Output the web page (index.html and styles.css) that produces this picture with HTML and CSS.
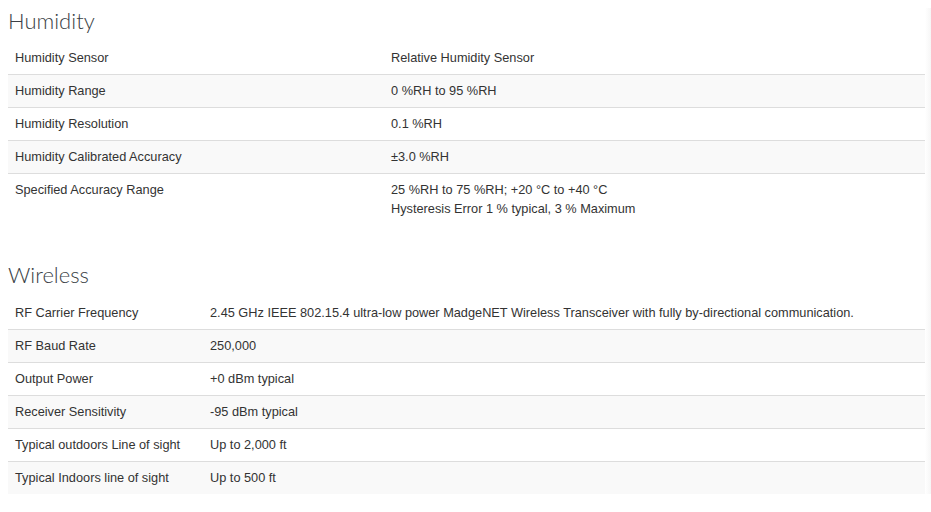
FILE: index.html
```html
<!DOCTYPE html>
<html>
<head>
<meta charset="utf-8">
<link rel="stylesheet" href="styles.css">
</head>
<body>
<div class="page">
  <section class="spec spec-humidity">
    <h2 class="spec-title">Humidity</h2>
    <table class="spec-table">
      <colgroup><col class="col-label-wide"><col></colgroup>
      <tbody>
        <tr><td>Humidity Sensor</td><td>Relative Humidity Sensor</td></tr>
        <tr><td>Humidity Range</td><td>0 %RH to 95 %RH</td></tr>
        <tr><td>Humidity Resolution</td><td>0.1 %RH</td></tr>
        <tr><td>Humidity Calibrated Accuracy</td><td>±3.0 %RH</td></tr>
        <tr><td>Specified Accuracy Range</td><td>25 %RH to 75 %RH; +20 °C to +40 °C<br>Hysteresis Error 1 % typical, 3 % Maximum</td></tr>
      </tbody>
    </table>
  </section>
  <section class="spec spec-wireless">
    <h2 class="spec-title">Wireless</h2>
    <table class="spec-table">
      <colgroup><col class="col-label-narrow"><col></colgroup>
      <tbody>
        <tr><td>RF Carrier Frequency</td><td>2.45 GHz IEEE 802.15.4 ultra-low power MadgeNET Wireless Transceiver with fully by-directional communication.</td></tr>
        <tr><td>RF Baud Rate</td><td>250,000</td></tr>
        <tr><td>Output Power</td><td>+0 dBm typical</td></tr>
        <tr><td>Receiver Sensitivity</td><td>-95 dBm typical</td></tr>
        <tr><td>Typical outdoors Line of sight</td><td>Up to 2,000 ft</td></tr>
        <tr><td>Typical Indoors line of sight</td><td>Up to 500 ft</td></tr>
      </tbody>
    </table>
  </section>
</div>
</body>
</html>
```
FILE: styles.css
```css
html, body {
  margin: 0;
  padding: 0;
  background: #fff;
}
body {
  font-family: "Liberation Sans", Arial, sans-serif;
  font-size: 12.75px;
  color: #333;
}
.page {
  width: 917px;
  padding: 0 6px 0 8px;
  position: relative;
}
.page::after {
  content: "";
  position: absolute;
  top: 0;
  right: 0;
  width: 6px;
  height: 512px;
  background: linear-gradient(to right, #ffffff, #f6f6f6);
}
.spec-title {
  font-family: Lato, "Open Sans", sans-serif;
  font-weight: 300;
  font-size: 22px;
  line-height: 26px;
  color: #3b3f46;
  margin: 8px 0 8px;
}
.spec-wireless {
  margin-top: 37px;
}
.spec-wireless .spec-title {
  margin-bottom: 9px;
}
.spec-table {
  width: 100%;
  table-layout: fixed;
  border-collapse: collapse;
  border-spacing: 0;
}
.col-label-wide {
  width: 376px;
}
.col-label-narrow {
  width: 195px;
}
.spec-table td {
  padding: 6px 7px 7px 7px;
  line-height: 19px;
  vertical-align: top;
  border-top: 1px solid #ddd;
  white-space: nowrap;
}
.spec-table tr:first-child td {
  border-top: none;
}
.spec-table tr:nth-child(even) td {
  background: #f9f9f9;
}
```
